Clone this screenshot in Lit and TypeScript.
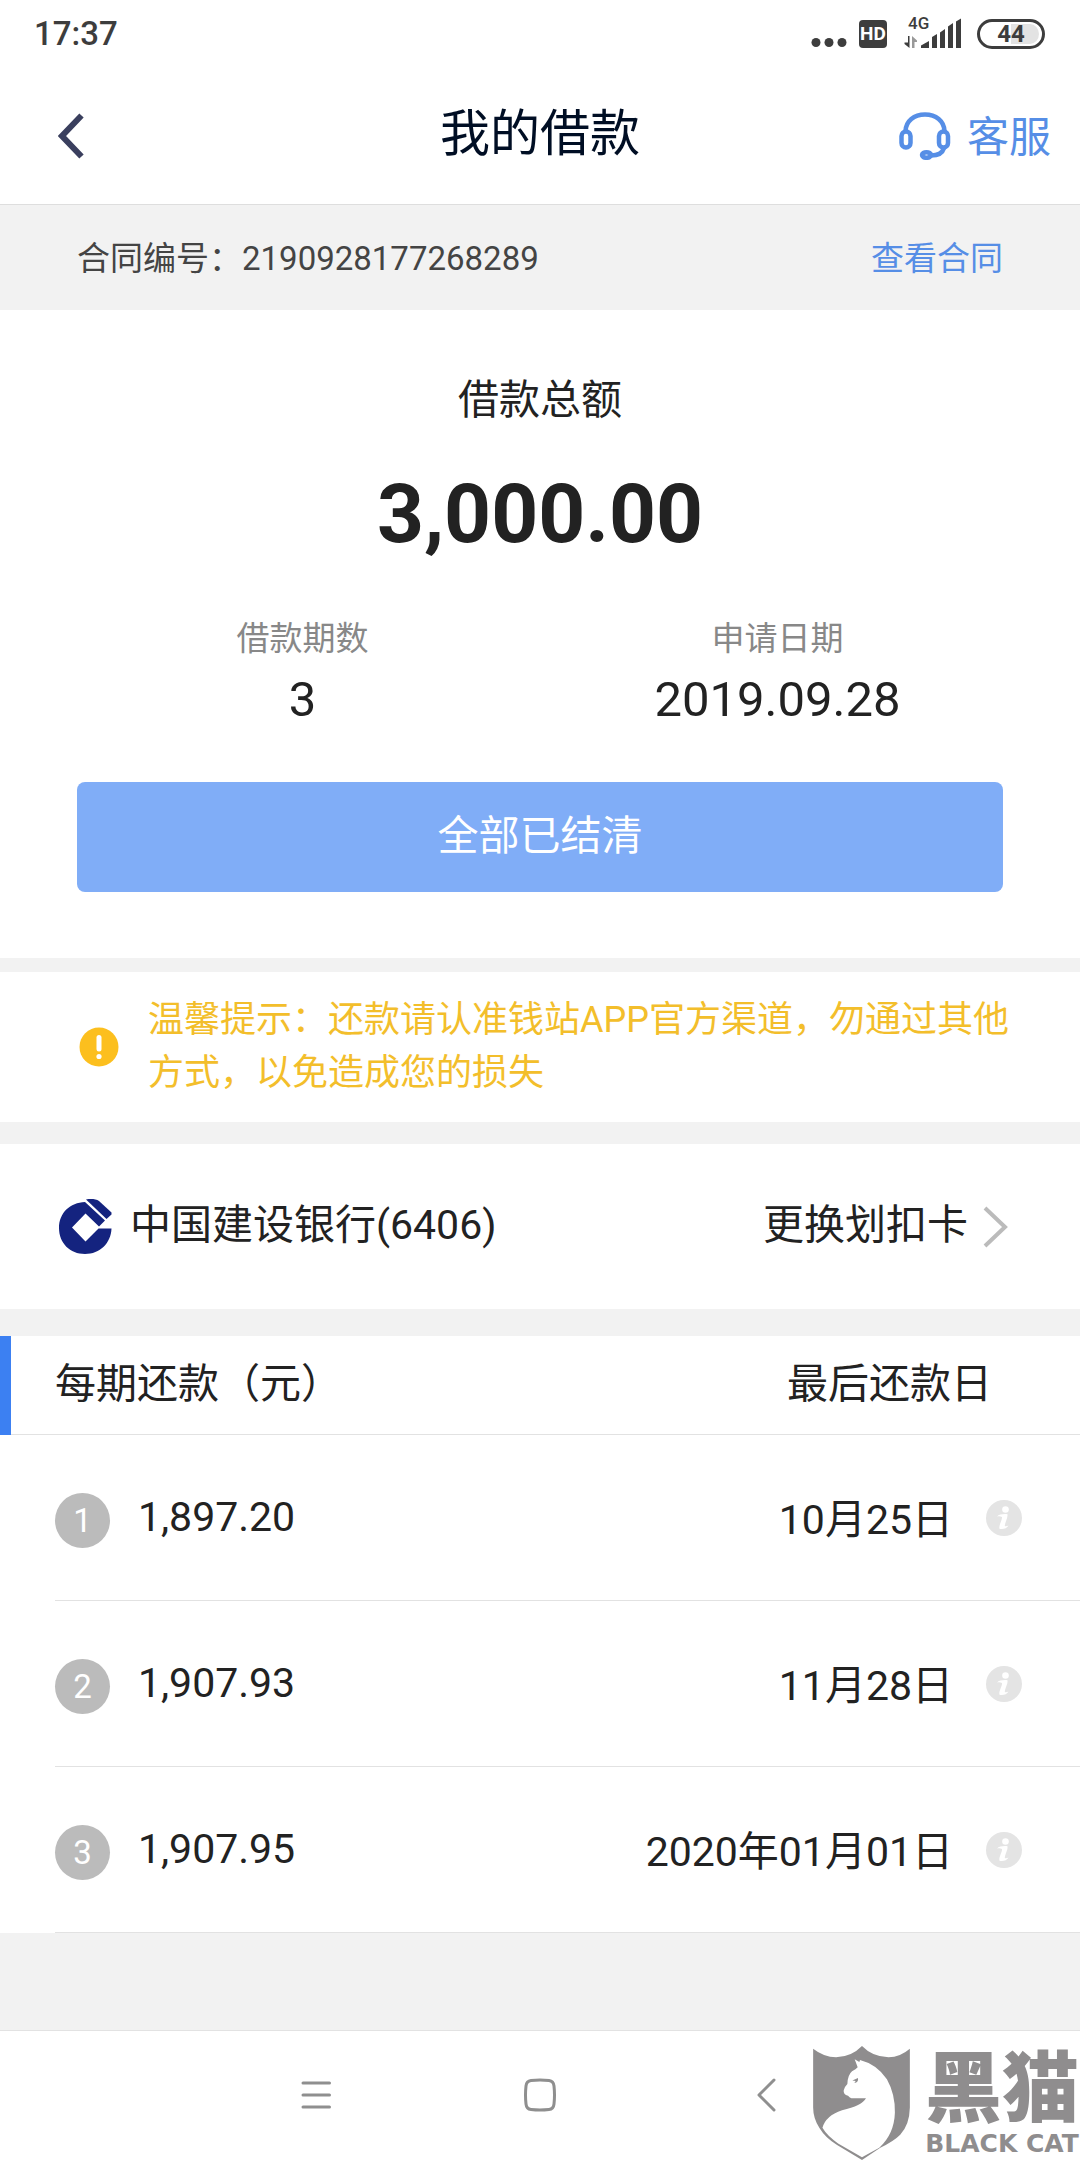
import { LitElement, html, css, svg } from "lit";
import { customElement, state } from "lit/decorators.js";

interface Installment {
  index: number;
  amount: string;
  due: string;
}

const backIcon = html`<svg width="26" height="46" viewBox="0 0 26 46" aria-hidden="true">
  <path d="M23.500 2.500 L4 23 L23.500 43.500" fill="none" stroke="#3a3f5e" stroke-width="6" />
</svg>`;

const headsetIcon = html`<svg width="52" height="48" viewBox="0 0 52 48" aria-hidden="true">
  <g fill="none" stroke="#568ee6" stroke-width="4.500">
    <path d="M6.500 19 C7 9 15 2.500 26 2.500 C37 2.500 45 9 45.500 19" />
    <rect x="2.500" y="19.500" width="9" height="16" rx="4.500" />
    <rect x="40" y="19.500" width="9" height="16" rx="4.500" />
    <path d="M45 36 C43.500 41 40 43.500 32 43.500" />
    <ellipse cx="27.500" cy="43" rx="4.500" ry="2.800" />
  </g>
</svg>`;

const signalIcon = html`<svg class="signal" width="58" height="32" viewBox="0 0 58 32" aria-label="4G">
  <text class="net" x="4" y="11">4G</text>
  <g fill="#3d3d3d">
    <path d="M4 18 H5.500 V30 L0.500 26 V24.500 H4 Z" />
    <path d="M8 30 V18 L13 22.500 V24 H10.500 V30 Z" fill="#999" />
    <path d="M17 30 V27.500 L25 23 V30 Z" />
    <path d="M28 30 V19 L33 16 V30 Z" />
    <path d="M36 30 V14.500 L41 11 V30 Z" />
    <path d="M44 30 V8.500 L49 5 V30 Z" />
    <path d="M52 30 V3.500 L57 0.500 V30 Z" />
  </g>
</svg>`;

const bankLogo = html`<svg width="53" height="55" viewBox="0 0 53 55" aria-hidden="true">
  <g fill="#14237f">
    <path d="M26 3 L46 21.500 L40 27.500 L26.500 14.500 L13 28.500 L26.500 42.500 L39.500 29.500 H52.500 C52 44 41 55 26 55 C11 55 0 44 0 29 C0 14 11 3.500 26 3 Z" />
    <path d="M27 0.500 C32 -0.500 37 0 40 2 L52.500 13.500 V15.500 L47.500 20 Z" />
  </g>
</svg>`;

const warnIcon = html`<svg class="fixed" width="40" height="40" viewBox="0 0 40 40" aria-hidden="true">
  <circle cx="20" cy="20" r="19.500" fill="#fcbf1e" />
  <path d="M20 10.500 V22" stroke="#fff" stroke-width="5" stroke-linecap="round" />
  <circle cx="20" cy="29.500" r="2.600" fill="#fff" />
</svg>`;

const chevronIcon = html`<svg width="25" height="42" viewBox="0 0 25 42" aria-hidden="true">
  <path d="M2 2 L22 21 L2 40" fill="none" stroke="#bbb" stroke-width="4" />
</svg>`;

const infoIcon = html`<svg width="36" height="36" viewBox="0 0 36 36" aria-hidden="true">
  <circle cx="18" cy="18" r="18" fill="#e4e4e4" />
  <g fill="#fff">
    <circle cx="19.500" cy="9.500" r="3.300" />
    <path d="M11 16.500 C13 14.500 17 13.800 21.500 14.200 C22 18 19 22 18.800 26 C20 26.600 21 26.200 22.500 25.500 C21 28.500 17 29.500 13.500 28.800 C12.500 25 16.500 20 16 17 C14.500 16.200 13 16.200 11 16.500 Z" />
  </g>
</svg>`;

const shieldLogo = html`<svg class="fixed" width="97" height="114" viewBox="153 135 291 343" aria-hidden="true">
  <path fill="#8f8d8e" d="M153 143 Q185 168 222 169 Q268 168 300 135 Q332 168 380 169 Q415 168 444 143 V320 Q443 372 415 402 Q395 422 355 441 L300 478 L225 433 Q190 412 172 382 Q153 352 153 320 Z" />
  <path fill="#fff" d="M278 175 L292 183 L294 177 Q345 190 375 235 Q400 280 399 335 Q397 400 352 441 L300 470 L228 428 Q195 405 181 381 Q190 345 240 328 Q300 315 312 292 H268 Q262 291 258 285 Q243 280 245 268 Q247 258 256 249 Q257 222 270 211 Q282 205 287 199 Z" />
  <path fill="#8f8d8e" d="M271 239 L288 231 Q290 244 277 246 L281 240 Z" />
</svg>`;

@customElement("app-root")
export class AppRoot extends LitElement {
  @state() private installments: Installment[] = [
    { index: 1, amount: "1,897.20", due: "10月25日" },
    { index: 2, amount: "1,907.93", due: "11月28日" },
    { index: 3, amount: "1,907.95", due: "2020年01月01日" },
  ];

  static styles = css`
    :host {
      display: flex;
      flex-direction: column;
      min-height: 100vh;
      background: #f2f2f2;
      color: #222;
      font-family: Roboto, "Noto Sans CJK SC", sans-serif;
      font-size: 41px;
      line-height: 56px;
    }
    * {
      box-sizing: border-box;
    }
    svg {
      display: block;
    }
    a {
      color: inherit;
      text-decoration: none;
    }
    button {
      border: 0;
      padding: 0;
      background: none;
      font: inherit;
      color: inherit;
    }
    h1,
    h2,
    p,
    dl,
    dd {
      margin: 0;
      font-size: inherit;
      font-weight: 400;
    }
    .fixed {
      flex: none;
    }

    .status {
      display: flex;
      justify-content: space-between;
      align-items: center;
      height: 67px;
      padding: 0 35px 0 34px;
      background: #fff;
      color: #3d3d3d;
    }
    .time {
      font-size: 33px;
      font-weight: 500;
    }
    .indicators {
      display: flex;
      align-items: center;
    }
    .signal {
      overflow: visible;
    }
    .hd {
      width: 28px;
      margin: 0 17px 0 12px;
      border-radius: 4px;
      background: #3d3d3d;
      color: #fff;
      font-size: 19px;
      font-weight: 700;
      line-height: 28px;
      text-align: center;
    }
    .net {
      font-size: 17px;
      font-weight: 500;
      line-height: 17px;
      fill: #3d3d3d;
    }
    .battery {
      width: 68px;
      margin-left: 15px;
      border: 3px solid #3d3d3d;
      border-radius: 15px;
      background: linear-gradient(90deg, #fff 50%, #e3e3e3 50%) content-box;
      padding: 2px 3px;
      font-size: 24px;
      font-weight: 700;
      line-height: 20px;
      text-align: center;
    }

    .bar {
      display: grid;
      grid-template-columns: 1fr auto 1fr;
      align-items: center;
      height: 138px;
      padding: 0 29px;
      border-bottom: 1px solid #dedede;
      background: #fff;
    }
    .bar-side {
      display: flex;
      padding-left: 29px;
    }
    .bar h1 {
      padding-bottom: 3px;
      color: #000e24;
      font-size: 50px;
      line-height: 64px;
    }
    .service {
      display: flex;
      justify-content: flex-end;
      align-items: center;
      gap: 16px;
      color: #568ee6;
      font-size: 42px;
    }
    .service span {
      padding-top: 4px;
    }

    .contract {
      display: flex;
      justify-content: space-between;
      padding: 31px 77px 28px;
      color: #444;
      font-size: 33px;
      line-height: 46px;
    }
    .contract a {
      color: #568ee6;
    }

    .summary {
      display: flex;
      flex-direction: column;
      padding: 62px 77px 66px;
      background: #fff;
      text-align: center;
    }
    .total {
      margin-top: 38px;
      font-size: 82px;
      font-weight: 700;
      line-height: 96px;
    }
    .facts {
      display: grid;
      grid-template-columns: 1fr 1fr;
      margin: 54px -12px 50px;
    }
    .facts dt {
      color: #888;
      font-size: 33px;
      line-height: 46px;
    }
    .facts dd {
      margin-top: 6px;
      font-size: 49px;
      line-height: 64px;
    }
    .settled {
      height: 110px;
      padding-bottom: 3px;
      border-radius: 8px;
      background: #80adf7;
      color: #fff;
    }

    .notice {
      display: flex;
      align-items: center;
      gap: 29px;
      margin-top: 14px;
      padding: 22px 64px 22px 79px;
      background: #fff;
      color: #f3be2b;
      font-size: 36px;
      line-height: 53px;
    }

    .bank {
      display: flex;
      justify-content: space-between;
      align-items: center;
      height: 165px;
      margin-top: 22px;
      padding: 0 72px 0 59px;
      background: #fff;
    }
    .bank-name,
    .bank-change {
      display: flex;
      align-items: center;
      gap: 18px;
    }
    .bank-change {
      gap: 15px;
    }
    .bank span {
      padding-bottom: 4px;
    }

    .plan {
      display: block;
      margin-top: 27px;
      background: #fff;
    }
    .plan thead,
    .plan tbody {
      display: block;
    }
    .plan tr {
      display: flex;
      align-items: center;
      border-bottom: 1px solid #e2e2e2;
    }
    .plan th,
    .plan td {
      padding: 0;
      font-weight: 400;
      text-align: left;
    }
    .plan thead {
      border-left: 11px solid #3c80f2;
    }
    .plan thead tr {
      justify-content: space-between;
      height: 99px;
      padding: 0 88px 3px 44px;
    }
    .plan tbody tr {
      height: 166px;
      margin-left: 55px;
      padding-right: 58px;
    }
    .plan .index {
      padding-top: 6px;
    }
    .badge {
      display: block;
      width: 55px;
      border-radius: 50%;
      background: #bbb;
      color: #fff;
      font-size: 33px;
      line-height: 55px;
      text-align: center;
    }
    .plan .amount {
      flex: 1;
      padding: 0 0 2px 28px;
    }
    .plan .due {
      padding: 4px 33px 0 0;
    }
    .info {
      display: block;
    }

    .nav {
      position: relative;
      display: flex;
      justify-content: center;
      align-items: center;
      gap: 145px;
      height: 130px;
      margin-top: auto;
      padding-bottom: 2px;
      border-top: 1px solid #e2e2e2;
      background: #fff;
    }
    .nav button {
      display: flex;
      justify-content: center;
      width: 80px;
    }
    .watermark {
      position: absolute;
      right: 1px;
      bottom: 0;
      display: flex;
      gap: 15px;
      color: #8f8d8e;
    }
    .brand {
      display: flex;
      flex-direction: column;
      justify-content: space-between;
      align-items: center;
      font-family: "DejaVu Sans", sans-serif;
      font-size: 25px;
      font-weight: 700;
      line-height: 32px;
      white-space: nowrap;
    }
    .brand-cn {
      font-family: "Noto Sans CJK SC", sans-serif;
      font-size: 77px;
      font-weight: 900;
      line-height: 74px;
    }
  `;

  private renderRow(item: Installment) {
    return html`<tr>
      <td class="index"><span class="badge">${item.index}</span></td>
      <td class="amount">${item.amount}</td>
      <td class="due">${item.due}</td>
      <td><button class="info" aria-label="详情">${infoIcon}</button></td>
    </tr>`;
  }

  private navIcon(shape: unknown) {
    return html`<svg width="32" height="34" viewBox="0 0 32 34" aria-hidden="true">
      <g fill="none" stroke="#8f8f8f" stroke-width="3" stroke-linecap="round" stroke-linejoin="round">${shape}</g>
    </svg>`;
  }

  render() {
    return html`
      <div class="status">
        <span class="time">17:37</span>
        <div class="indicators">
          <svg width="36" height="28" viewBox="0 0 36 28" aria-hidden="true">
            <g fill="#3d3d3d">
              <circle cx="5" cy="22.500" r="4.500" />
              <circle cx="18" cy="22.500" r="4.500" />
              <circle cx="31" cy="22.500" r="4.500" />
            </g>
          </svg>
          <span class="hd">HD</span>
          ${signalIcon}
          <span class="battery">44</span>
        </div>
      </div>

      <header class="bar">
        <div class="bar-side"><button aria-label="返回">${backIcon}</button></div>
        <h1>我的借款</h1>
        <a class="service" href="#service">${headsetIcon}<span>客服</span></a>
      </header>

      <div class="contract">
        <span>合同编号：2190928177268289</span>
        <a href="#contract">查看合同</a>
      </div>

      <section class="summary">
        <h2>借款总额</h2>
        <p class="total">3,000.00</p>
        <dl class="facts">
          <div>
            <dt>借款期数</dt>
            <dd>3</dd>
          </div>
          <div>
            <dt>申请日期</dt>
            <dd>2019.09.28</dd>
          </div>
        </dl>
        <button class="settled">全部已结清</button>
      </section>

      <section class="notice">
        ${warnIcon}
        <p>温馨提示：还款请认准钱站APP官方渠道，勿通过其他方式，以免造成您的损失</p>
      </section>

      <section class="bank">
        <div class="bank-name">${bankLogo}<span>中国建设银行(6406)</span></div>
        <a class="bank-change" href="#card"><span>更换划扣卡</span>${chevronIcon}</a>
      </section>

      <table class="plan">
        <thead>
          <tr>
            <th scope="col">每期还款（元）</th>
            <th scope="col">最后还款日</th>
          </tr>
        </thead>
        <tbody>
          ${this.installments.map((item) => this.renderRow(item))}
        </tbody>
      </table>

      <nav class="nav">
        <button aria-label="菜单">${this.navIcon(svg`<path d="M4 5 H30.500 M4 17 H30.500 M4 29 H30.500" />`)}</button>
        <button aria-label="主页">${this.navIcon(svg`<path d="M7 2.500 Q16 1.500 25 2.500 Q29.500 3 30 8 Q31 17 30 26 Q29.500 31 25 31.500 Q16 32.500 7 31.500 Q2.500 31 2 26 Q1 17 2 8 Q2.500 3 7 2.500 Z" />`)}</button>
        <button aria-label="后退">${this.navIcon(svg`<path d="M25 2 L10 17 L25 32" />`)}</button>
        <div class="watermark">
          ${shieldLogo}
          <div class="brand"><span class="brand-cn">黑猫</span><span>BLACK CAT</span></div>
        </div>
      </nav>
    `;
  }
}
